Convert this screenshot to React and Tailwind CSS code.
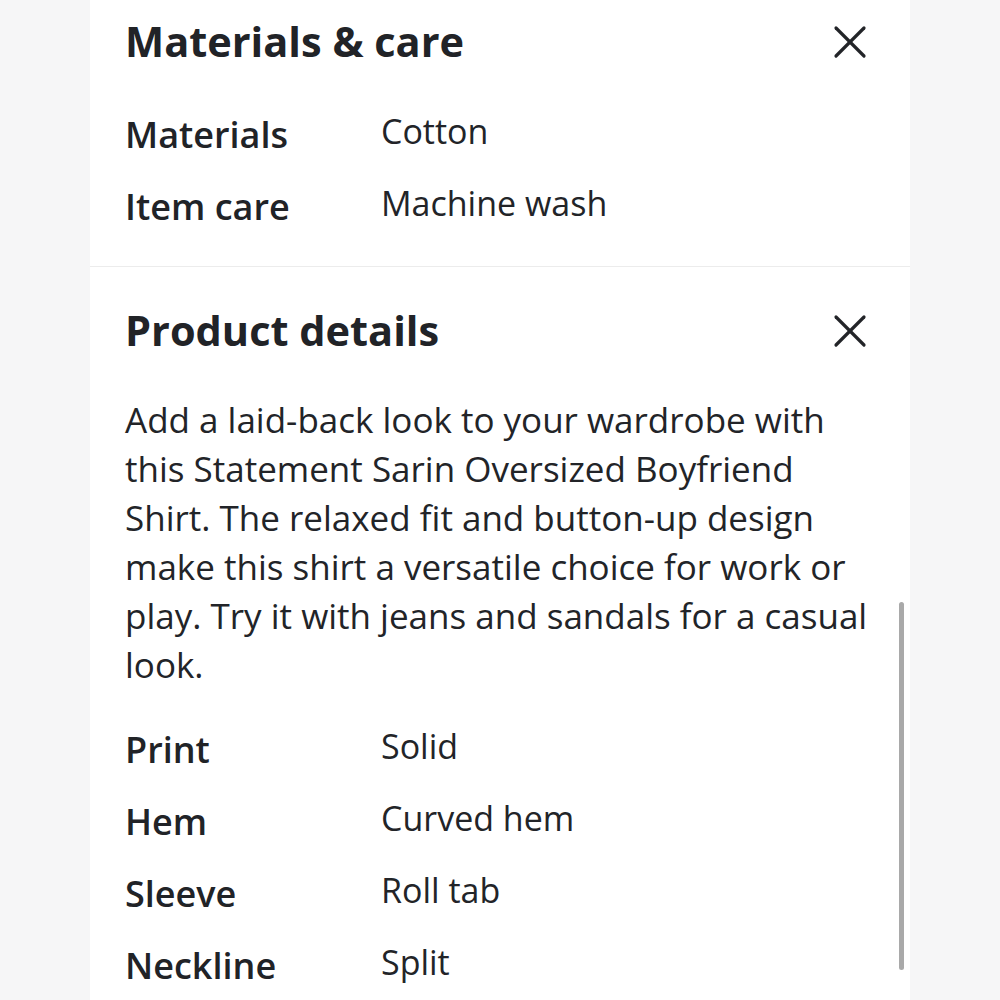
const CloseIcon = () => (
  <svg width="34" height="34" viewBox="0 0 34 34" fill="none" stroke="#222428" strokeWidth="3.2" strokeLinecap="round">
    <path d="M3 3 L31 31" />
    <path d="M31 3 L3 31" />
  </svg>
);

const SpecRow = ({ label, value }) => (
  <div className="flex h-[72px] items-center">
    <span className="w-[256px] shrink-0 text-[36px] font-semibold text-[#212327]">{label}</span>
    <span className="-mt-[6px] text-[34px] text-[#222428]">{value}</span>
  </div>
);

const SectionHeader = ({ title, className = '' }) => (
  <div className={`flex items-center justify-between pr-[8px] ${className}`}>
    <h2 className="text-[41.5px] font-bold leading-none text-[#212327]">{title}</h2>
    <CloseIcon />
  </div>
);

export default function App() {
  return (
    <div
      className="flex min-h-[1000px] justify-center bg-[#f6f6f7]"
      style={{ fontFamily: '"Open Sans", Lato, sans-serif' }}
    >
      <div className="relative h-[1000px] w-[820px] overflow-hidden bg-white">
        <section className="h-[267px] border-b border-[#ececec] px-[35px] pt-[21px]">
          <SectionHeader title="Materials & care" />
          <div className="mt-[36px]">
            <SpecRow label="Materials" value="Cotton" />
            <SpecRow label="Item care" value="Machine wash" />
          </div>
        </section>

        <section className="px-[35px] pt-[43px]">
          <SectionHeader title="Product details" />
          <p className="mt-[43px] text-[35px] leading-[49px] text-[#222428]">
            Add a laid-back look to your wardrobe with
            <br />
            this Statement Sarin Oversized Boyfriend
            <br />
            Shirt. The relaxed fit and button-up design
            <br />
            make this shirt a versatile choice for work or
            <br />
            play. Try it with jeans and sandals for a casual
            <br />
            look.
          </p>
          <div className="mt-[25px]">
            <SpecRow label="Print" value="Solid" />
            <SpecRow label="Hem" value="Curved hem" />
            <SpecRow label="Sleeve" value="Roll tab" />
            <SpecRow label="Neckline" value="Split" />
          </div>
        </section>

        <div className="absolute left-[809px] top-[602px] h-[368px] w-[5px] rounded-full bg-[#a9a9a9]" />
      </div>
    </div>
  );
}
